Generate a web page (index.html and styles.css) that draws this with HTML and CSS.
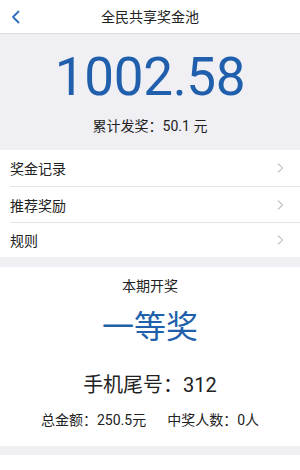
FILE: index.html
```html
<!DOCTYPE html>
<html lang="zh">
<head>
<meta charset="utf-8">
<link rel="stylesheet" href="styles.css">
</head>
<body>
<div class="page">
  <header class="topbar">
    <span class="back">
      <svg width="10" height="14" viewBox="0 0 10 14"><polyline points="7.5,1.5 2,7 7.5,12.5" fill="none" stroke="#2f6fb8" stroke-width="1.8" stroke-linecap="round" stroke-linejoin="round"/></svg>
    </span>
    <h1 class="title">全民共享奖金池</h1>
  </header>
  <section class="hero">
    <div class="amount">1002.58</div>
    <div class="total">累计发奖：50.1 元</div>
  </section>
  <ul class="menu">
    <li class="item"><span>奖金记录</span><svg class="arrow" width="8" height="12" viewBox="0 0 8 12"><polyline points="2,1.5 6.5,6 2,10.5" fill="none" stroke="#c4c4c4" stroke-width="1.2"/></svg></li>
    <li class="item"><span>推荐奖励</span><svg class="arrow" width="8" height="12" viewBox="0 0 8 12"><polyline points="2,1.5 6.5,6 2,10.5" fill="none" stroke="#c4c4c4" stroke-width="1.2"/></svg></li>
    <li class="item"><span>规则</span><svg class="arrow" width="8" height="12" viewBox="0 0 8 12"><polyline points="2,1.5 6.5,6 2,10.5" fill="none" stroke="#c4c4c4" stroke-width="1.2"/></svg></li>
  </ul>
  <section class="draw">
    <div class="draw-label">本期开奖</div>
    <div class="prize">一等奖</div>
    <div class="phone">手机尾号：312</div>
    <div class="stats"><span>总金额：250.5元</span><span>中奖人数：0人</span></div>
  </section>
  <div class="next"></div>
</div>
</body>
</html>
```
FILE: styles.css
```css
* { box-sizing: border-box; margin: 0; padding: 0; }
html, body { width: 300px; height: 470px; overflow: hidden; }
body {
  background: #efeff4;
  font-family: Roboto, "Noto Sans CJK SC", sans-serif;
  color: #222;
}
.page { display: flex; flex-direction: column; height: 470px; }
.topbar {
  height: 34px;
  background: #fff;
  border-bottom: 1px solid #dcdce0;
  display: flex;
  align-items: center;
  justify-content: center;
  position: relative;
}
.back { position: absolute; left: 11px; top: 10px; display: flex; }
.title { font-size: 14px; font-weight: normal; line-height: 20px; color: #222; }
.hero {
  padding: 13px 0 14px;
  text-align: center;
}
.amount {
  font-size: 53px;
  line-height: 60px;
  color: #1f5fab;
  letter-spacing: -0.3px;
}
.total { margin-top: 9px; font-size: 14px; line-height: 20px; color: #222; }
.menu { list-style: none; background: #fff; padding-left: 10px; }
.item {
  height: 36px;
  padding: 0 16px 0 0;
  display: flex;
  align-items: center;
  justify-content: space-between;
  font-size: 14px;
  border-top: 1px solid #e4e4e8;
}
.item:first-child { border-top: none; height: 36px; }
.item:last-child { height: 35px; }
.draw {
  margin-top: 10px;
  background: #fff;
  text-align: center;
  padding: 9px 0 16px;
}
.draw-label { font-size: 14px; line-height: 20px; }
.prize { margin-top: 11px; font-size: 32px; line-height: 40px; color: #1f5fab; }
.phone { margin-top: 24px; font-size: 20px; line-height: 28px; }
.stats {
  margin-top: 11px;
  font-size: 14px;
  line-height: 20px;
  display: flex;
  justify-content: center;
  gap: 21px;
}
.next { margin-top: 9px; background: #fff; flex: 1; }
```
